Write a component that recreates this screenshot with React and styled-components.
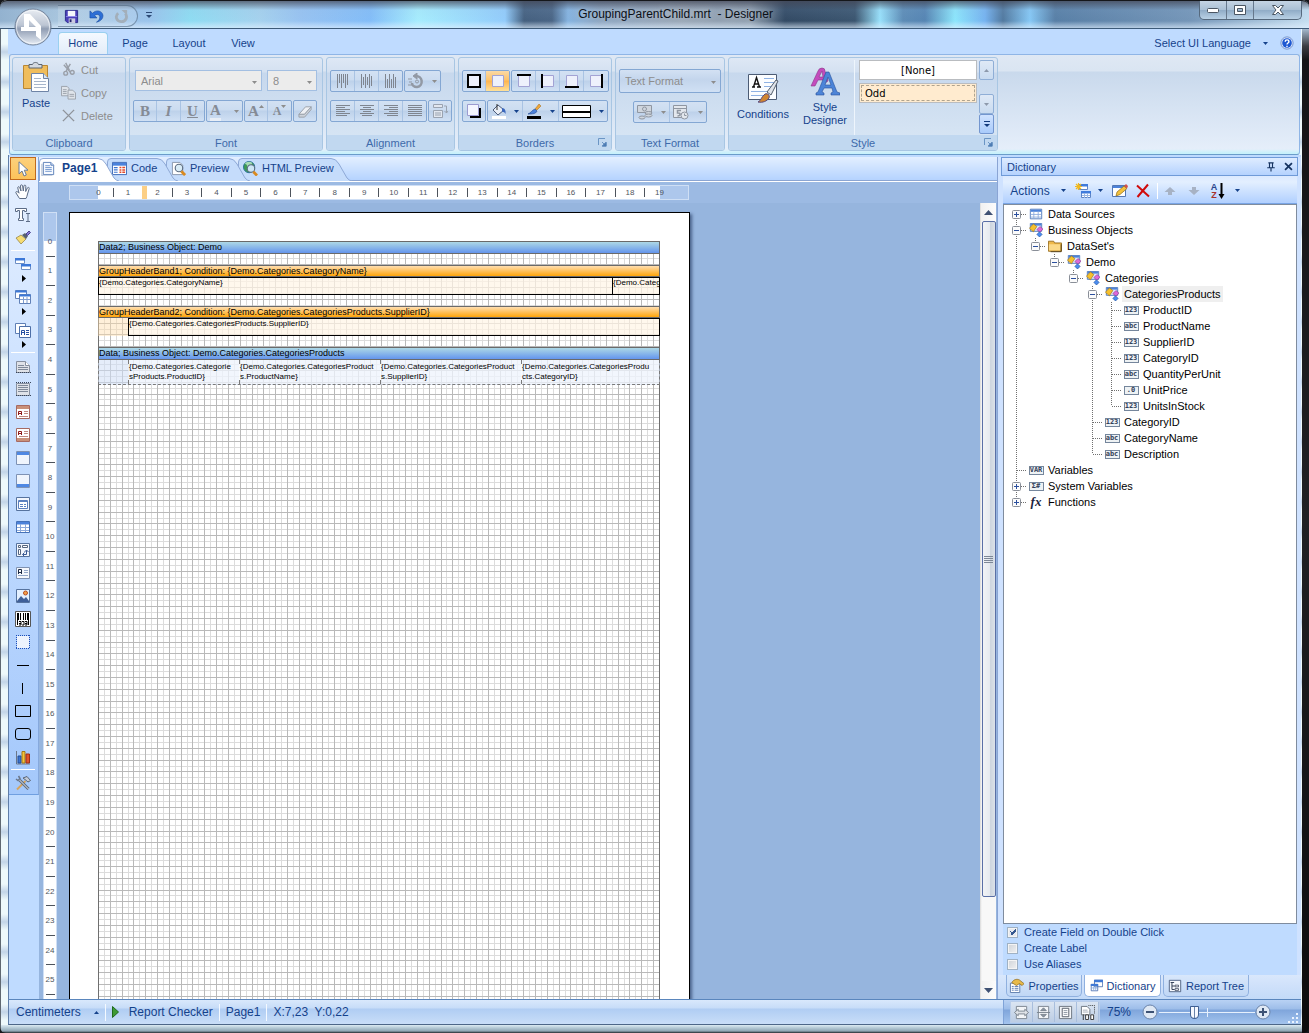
import React, { useState } from 'react';
import styled, { createGlobalStyle, css } from 'styled-components';

const GlobalStyle = createGlobalStyle`
  * { box-sizing: border-box; }
  body {
    margin: 0;
    overflow: hidden;
    background: #16181c;
    font-family: 'Liberation Sans', Arial, sans-serif;
    font-size: 11px;
    color: #15428b;
  }
  button, select, input { font: inherit; color: inherit; }
  button { margin: 0; padding: 0; border: 0; background: none; cursor: default; }
  svg { display: block; flex: none; }
`;

/* ----- Icons ----- */
const SHAPES = {
  save: (
    <>
      <path d="M1.5 1.5h13v13h-11l-2-2z" fill="#4a3fb8" stroke="#2a2a8a" />
      <path d="M4 2h8v6H4z" fill="#f4f6fb" />
      <path d="M5 10h7v5H5z" fill="#c9cbe0" />
      <path d="M6 11h2v3H6z" fill="#23236e" />
      <path d="M2 8h12" stroke="#8f87ea" />
    </>
  ),
  undo: (
    <path d="M1 2v7.500h7.500L6 7c2-2 5-1.500 5.500 1 .5 2.300-1 4.500-3.500 6 4.500-.8 7.300-4 6.800-7.500C14 2 8 .2 3.800 4.500z" fill="#2d6fd6" stroke="#1c4fa3" strokeWidth=".7" />
  ),
  redo: (
    <>
      <path d="M4.500 4.500C.8 7.500 2.500 13 7.500 13.500c5 .3 7.500-5 4.500-8.500" stroke="#a3afba" strokeWidth="3" fill="none" />
      <path d="M8 1h6v6z" fill="#a3afba" />
    </>
  ),
  help: (
    <>
      <circle cx="8" cy="8" r="7" fill="#dfe9fa" stroke="#6c8cc9" />
      <circle cx="8" cy="8" r="5.500" fill="#1e58d2" />
      <path d="M6 6.500c0-2.700 4.200-2.700 4.200 0 0 1.600-2.200 1.500-2.200 3.200M8 11v1.600" stroke="#fff" strokeWidth="1.600" fill="none" />
    </>
  ),
  cut: (
    <g stroke="#9a9fa8" fill="none" strokeWidth="1.500">
      <path d="M5 1l4 8M10 2L5.500 9.500M3 3l7 8" />
      <circle cx="5" cy="12" r="2" />
      <circle cx="12" cy="11" r="2" />
    </g>
  ),
  copy: (
    <g fill="#dfe4ea" stroke="#9ba1aa">
      <path d="M.5 1.500h6l2 2v8h-8z" />
      <path d="M7.500 5.500h5l3 3v6.500h-8z" />
      <path d="M2 5h4M2 7h4M2 9h4M9 10h5M9 12h5" />
    </g>
  ),
  cross: <path d="M2 2l12 12M14 2L2 14" stroke="#8f949b" strokeWidth="1.500" />,
  bucket: (
    <>
      <path d="M2 7l5-5 6 5-6 5z" fill="#e8edf5" stroke="#4b5a78" />
      <path d="M6 1v6" stroke="#333" />
      <path d="M11 5c3 0 4 3 3.500 6-1-2-2.500-2.500-3.500-2z" fill="#3b67bd" />
      <path d="M1 13h14v3H1z" fill="#fff" />
    </>
  ),
  pen: (
    <>
      <path d="M13 1l2 2-4 4-2-1z" fill="#f0a63a" stroke="#9c6a1d" strokeWidth=".5" />
      <path d="M9 6l2 2c-1 3-5 3-9 3 3-1 4-4 7-5z" fill="#4c82da" stroke="#23478f" strokeWidth=".6" />
      <path d="M1 13h14v3H1z" fill="#000" />
    </>
  ),
  shadowBox: (
    <>
      <path d="M4 13h9V5h2v10H4z" fill="#000" />
      <path d="M1.500 1.500h11v11h-11z" fill="#f4f6ff" stroke="#9b9bd0" />
    </>
  ),
  rotate: (
    <g fill="none" stroke="#9299a4">
      <path d="M7 3c8-1 9 10 2 11-3 0-5-2-5-4" strokeWidth="2.500" />
      <path d="M9 0v6L5 3z" fill="#9299a4" />
      <path d="M0 6h4M1 9h3M0 12h4" />
      <circle cx="9" cy="8.500" r="1.500" />
    </g>
  ),
  wrap: (
    <g fill="none" stroke="#9aa3b0">
      <path d="M1.500 1.500h9v3h-9zM1.500 7.500h9v7h-9z" fill="#e2e7ef" />
      <path d="M3 10h6M3 12h6M12 3h2.500v7M12.500 8l2 2 1.500-2" />
    </g>
  ),
  eraser: (
    <>
      <path d="M1 11l7-8h6l-7 8z" fill="#eef0f4" stroke="#9aa0aa" />
      <path d="M1 11v3h6l7-8V3l-7 8z" fill="#cdd3db" stroke="#9aa0aa" />
    </>
  ),
  money: (
    <g fill="#cfd5dd" stroke="#8f96a1">
      <path d="M.5 1.500h14v7H.5z" />
      <circle cx="7.500" cy="5" r="2" />
      <ellipse cx="11.500" cy="9" rx="3.500" ry="1.500" />
      <ellipse cx="11.500" cy="11.500" rx="3.500" ry="1.500" />
      <ellipse cx="5" cy="13.500" rx="3" ry="1.500" />
    </g>
  ),
  date: (
    <g fill="#e3e7ed" stroke="#8f96a1">
      <path d="M.5 1.500h13v12H.5zM.5 4.500h13" />
      <path d="M8 6.500H4.500v2.500c3.500-.5 3.500 3 0 3" fill="none" strokeWidth="1.500" />
      <circle cx="11.500" cy="11.500" r="3.500" />
      <path d="M11.500 9.500v2h2" fill="none" />
    </g>
  ),
  page: (
    <>
      <path d="M2.500 1.500h8l3 3v10h-11z" fill="#f7faff" stroke="#5b7fb8" />
      <path d="M10.500 1.500v3h3" fill="#c9dbf5" stroke="#5b7fb8" />
      <path d="M4.500 5h5M4.500 7h7M4.500 9h7M4.500 11h7" stroke="#6f94cd" />
      <path d="M1 3v13h11" stroke="#9fb0c8" fill="none" />
    </>
  ),
  code: (
    <>
      <path d="M.5 1.500h15v13H.5z" fill="#fff" stroke="#3764b4" />
      <path d="M1 2h14v3H1z" fill="#4a82dd" />
      <path d="M2 7h4M2 9.500h4M2 12h4" stroke="#3c74d0" strokeWidth="1.200" />
      <path d="M8 7h2M11 7h3M8 9.500h2M11 9.500h3M8 12h2M11 12h3" stroke="#e0492c" strokeWidth="1.600" />
    </>
  ),
  preview: (
    <>
      <path d="M1.500 1.500h8l3 3v10h-11z" fill="#fff" stroke="#8795ab" />
      <circle cx="8.500" cy="7.500" r="4" fill="#d9ecf6" stroke="#5b6b80" strokeWidth="1.200" />
      <path d="M11 11l4 4" stroke="#d98a20" strokeWidth="3" />
    </>
  ),
  html: (
    <>
      <circle cx="6.500" cy="6.500" r="6" fill="#3d9a54" stroke="#2b6f9c" />
      <path d="M2 3c3 1 3 3 2 5l4-3 2-3C7 0 3 1 2 3z" fill="#a6dcb4" />
      <circle cx="8.500" cy="8" r="4" fill="#cde6f4" stroke="#5b6b80" strokeWidth="1.200" />
      <path d="M11 11.500l4 4" stroke="#d98a20" strokeWidth="3" />
    </>
  ),
  arrow: <path d="M4 .8v12l3-2.800 2 5 2.300-1-2-4.800H13z" fill="#fff" stroke="#6b7b95" />,
  hand: (
    <path d="M4.500 14.500L1 9c-.8-1.500 1-2 2-.8l1 1L2.800 4c-.3-1.500 1.400-1.800 1.900-.4L6 7 5.500 2c0-1.600 1.900-1.600 2.100 0L8.300 7l.6-5c.3-1.400 2-1.200 1.900.3L10.700 7.500l1.700-3.600c.7-1.200 2.100-.5 1.800.8L12.500 10c-.4 2-.7 3-1.500 4.500z" fill="#fff" stroke="#5c6c86" />
  ),
  textEdit: (
    <>
      <path d="M.5 1.500h11v3H9.500V3.500h-2v8h1v2h-5v-2h1v-8h-2v1h-2z" fill="#fff" stroke="#5c6c86" />
      <path d="M11 6.500h4M11 14.500h4M13 7v8" stroke="#5c6c86" />
    </>
  ),
  brush: (
    <>
      <path d="M1 8l5-3 5 4-5 5z" fill="#f6dc73" stroke="#8d7a3c" strokeWidth=".7" />
      <path d="M7 5l3-2 3 3-2 3z" fill="#57606e" />
      <path d="M11 4l3-3 1.500 1.500-3 3z" fill="#8478d0" stroke="#4b4290" />
    </>
  ),
  bands: (
    <>
      <path d="M.5 2.500h9v5h-9zM6.500 8.500h9v5h-9z" fill="#fff" stroke="#6e8fc4" />
      <path d="M0 2h10v2.500H0zM6 8h10v2.500H6z" fill="#3c78d8" />
    </>
  ),
  crossBands: (
    <>
      <path d="M.5 1.500h11v8H.5z" fill="#fff" stroke="#6181b8" />
      <path d="M.5 1.500h11v2H.5z" fill="#3c78d8" />
      <path d="M4.500 5.500h11v9h-11z" fill="#fff" stroke="#6181b8" />
      <path d="M4.500 5.500h11v2h-11z" fill="#3c78d8" />
      <path d="M5 10.500h10M8.500 8v6M12 8v6" stroke="#7f9dd0" />
    </>
  ),
  components: (
    <>
      <path d="M.5 1.500h10v10H.5z" fill="#fff" stroke="#5f7fb5" />
      <path d="M4.500 4.500h11v11h-11z" fill="#fff" stroke="#4d6fa8" />
      <path d="M6.500 13V8.500h3V13M6.500 10.500h3M11 8.500h3M11 10.500h3M11 12.500h3" stroke="#254fa0" fill="none" />
    </>
  ),
  reportTitle: (
    <>
      <path d="M1.500 3.500h9l4 4v7h-13z" fill="#dfe2e8" stroke="#8790a0" />
      <path d="M10.500 3.500v4h4" fill="#fff" stroke="#8790a0" />
      <path d="M3 7.500h6M3 9.500h10M3 11.500h10" stroke="#7f8999" />
      <path d="M1 14.500h15" stroke="#39455a" strokeDasharray="1 1" />
    </>
  ),
  reportSummary: (
    <>
      <path d="M1.500 2.500h13v12h-13z" fill="#dfe2e8" stroke="#8790a0" />
      <path d="M3 4.500h10M3 6.500h10M3 8.500h10M3 10.500h10" stroke="#7f8999" />
      <path d="M1 1.500h15M1 14.500h15" stroke="#39455a" strokeDasharray="1 1" />
    </>
  ),
  headerBand: (
    <>
      <path d="M1.500 1.500h13v13h-13z" fill="#fff" stroke="#a66a63" />
      <path d="M2 2h12v3H2z" fill="#c99079" />
      <path d="M3.500 11V7.500h3V11M3.500 9.500h3" stroke="#8e1d1d" fill="none" />
      <path d="M9 7.500h4M9 9.500h4M4 12.500h9" stroke="#c08b83" />
    </>
  ),
  footerBand: (
    <>
      <path d="M1.500 1.500h13v13h-13z" fill="#fff" stroke="#a66a63" />
      <path d="M2 11h12v3H2z" fill="#c99079" />
      <path d="M3.500 8V4.500h3V8M3.500 6.500h3" stroke="#8e1d1d" fill="none" />
      <path d="M9 4.500h4M9 6.500h4M4 9.500h9" stroke="#c08b83" />
    </>
  ),
  topBand: (
    <>
      <path d="M1.500 1.500h13v13h-13z" fill="#f0f5fd" stroke="#7e92b5" />
      <path d="M2 2h12v3H2z" fill="#4f88e3" />
    </>
  ),
  bottomBand: (
    <>
      <path d="M1.500 1.500h13v13h-13z" fill="#f0f5fd" stroke="#7e92b5" />
      <path d="M2 11h12v3H2z" fill="#4f88e3" />
    </>
  ),
  panel: (
    <>
      <path d="M1.500 1.500h13v13h-13z" fill="#f2f6fd" stroke="#56739f" />
      <path d="M3.500 4.500h9v8h-9z" fill="#fff" stroke="#5b7fbe" />
      <path d="M4 5.500h8M5 8.500h3M9 8.500h2M5 10.500h3M9 10.500h2" stroke="#5c82c2" />
    </>
  ),
  table: (
    <>
      <path d="M1.500 2.500h13v11h-13z" fill="#fff" stroke="#4672b8" />
      <path d="M2 3h12v2.500H2z" fill="#4c82da" />
      <path d="M2 8.500h12M2 11.500h12M5.500 5v8M10.500 5v8" stroke="#8daadb" />
    </>
  ),
  crosstab: (
    <>
      <path d="M1.500 1.500h13v13h-13z" fill="#f2f6fd" stroke="#56739f" />
      <path d="M3.500 3.500h2v2h-2zM7.500 3.500h5v2h-5zM3.500 7.500h2v5h-2z" fill="#fff" stroke="#55657f" />
      <path d="M8 12.500h3.500v-4M9.500 10.500l-2 2 2 2M9.500 10l2-2 2 2" stroke="#3a5a94" fill="none" />
    </>
  ),
  text: (
    <>
      <path d="M1.500 2.500h13v11h-13z" fill="#f5f8fd" stroke="#7f92b2" />
      <path d="M3.500 9V4.500h3V9M3.500 7.500h3" stroke="#1f2c46" fill="none" />
      <path d="M9 5.500h4M9 7.500h4M3 10.500h10" stroke="#94a8c9" />
    </>
  ),
  image: (
    <>
      <path d="M1.500 1.500h13v13h-13z" fill="#e4f0ff" stroke="#56739f" />
      <circle cx="10.500" cy="5" r="2" fill="#f1a04a" stroke="#b84d1e" />
      <path d="M2 13l4-5 3 3 2-2 3 4v1H2z" fill="#3f5f98" />
    </>
  ),
  barcode: (
    <>
      <path d="M.5.500h15v15H.5z" fill="#fff" stroke="#555" />
      <path d="M3.500 2v7M5.500 2v7M8.500 2v7M10.500 2v7M13.500 2v12M2.500 2v12M12.500 2v7" stroke="#000" />
      <path d="M4 10.500h2v3.500H4M7 10.500h2v3.500H7M10 10.500h2v3.500h-2M4 12.500h2M10 12.500h2" stroke="#000" fill="none" />
    </>
  ),
  dottedBox: (
    <>
      <path d="M2 2h12v12H2z" fill="#edf3fd" />
      <path d="M1 1.500h14M1 14.500h14M1.500 1v14M14.500 1v14" stroke="#1f4fb8" strokeDasharray="1 1" />
    </>
  ),
  hline: <path d="M2 8.500h12" stroke="#000" />,
  vline: <path d="M7.500 3v11" stroke="#000" />,
  rect: <path d="M.5 2.500h15v11H.5z" stroke="#000" fill="none" />,
  roundRect: <rect x=".5" y="2.500" width="15" height="11" rx="2.500" stroke="#000" fill="none" />,
  chart: (
    <>
      <path d="M1.500 2v13H15" stroke="#6c7788" fill="none" />
      <path d="M3 7h3v7H3z" fill="#3c74d0" stroke="#234c94" />
      <path d="M7 2.500h3V14H7z" fill="#f4c33a" stroke="#a27916" />
      <path d="M11 5h3.500v9H11z" fill="#e2532c" stroke="#9c2f14" />
    </>
  ),
  tools: (
    <>
      <path d="M2 14.500L10.500 6" stroke="#d8a45c" strokeWidth="2" />
      <path d="M8 3l4-1.500 3.500 4-2.500 1.500-3-2.500z" fill="#c3cad5" stroke="#5b6677" />
      <path d="M4.500 5l9 9" stroke="#5f6b7d" strokeWidth="3" />
      <path d="M4.500 5l9 9" stroke="#e4e9f0" />
      <path d="M1 4l2 1.500 2-2L3.500 1" stroke="#6c788b" fill="none" strokeWidth="1.500" />
    </>
  ),
  newItem: (
    <>
      <path d="M4.500 1.500h8v5h-8zM6.500 8.500h9v6h-9z" fill="#fff" stroke="#5e85c5" />
      <path d="M4 1h9v2.500H4zM6 8h10v2.500H6z" fill="#3f7bdb" />
      <path d="M7 12.500h8M9.500 10v5M12.500 10v5" stroke="#9ab6e2" />
      <path d="M3.500 0v7M0 3.500h7M1 1l5 5M6 1L1 6" stroke="#f2b91d" strokeWidth="1.200" />
    </>
  ),
  edit: (
    <>
      <path d="M.5 2.500h13v11H.5z" fill="#fff" stroke="#5478b4" />
      <path d="M1 3h12v2H1z" fill="#4c82da" />
      <path d="M4 13l1-4 7-6 3 2.500-7 6z" fill="#f4c23c" stroke="#8d6a1b" strokeWidth=".7" />
      <path d="M12 3l2-2 2 2-1 2.500z" fill="#d2524b" />
    </>
  ),
  remove: <path d="M2 2.500l12 11M13 1.500L2.500 14" stroke="#d00b0b" strokeWidth="2" />,
  up: <path d="M8 4l5.500 5H10v3H6V9H2.500z" fill="#a7b2c4" />,
  down: <path d="M8 12L2.500 7H6V4h4v3h3.500z" fill="#a7b2c4" />,
  folder: (
    <>
      <path d="M.5 2.500h6l1 2h8v9.500H.5z" fill="#efb94a" stroke="#94691c" />
      <path d="M1 6h13v7H1z" fill="#fbd988" />
      <path d="M15 6v8.500H3" stroke="#4d3a14" fill="none" />
    </>
  ),
  business: (
    <>
      <path d="M1.500.5h13v9h-13z" fill="#dfe9fb" stroke="#4672b8" />
      <path d="M2 1h12v2H2z" fill="#4c82da" />
      <path d="M.5 6l4.500-5 4 3-4 6z" fill="#f6c02c" stroke="#9a7012" strokeWidth=".7" />
      <path d="M9 7.500l3.500-3.500 3.500 3-3.500 3.500z" fill="#dd6ad8" stroke="#8e348b" strokeWidth=".7" />
      <path d="M9 13l3-3 3 3-3 3z" fill="#4a8df0" stroke="#1c4f9d" strokeWidth=".7" />
    </>
  ),
  properties: (
    <>
      <path d="M1.500 5.500h10v10h-10z" fill="#fff" stroke="#5d7cac" />
      <path d="M3 9h2M6 9h4M3 11h2M6 11h4M3 13h2M6 13h4" stroke="#5677b0" />
      <path d="M3 5c2-4 6-4 8-3l5 4-2 2-3-2-3 2z" fill="#e8ba4a" stroke="#8f6a1c" strokeWidth=".8" />
    </>
  ),
  dictionary: (
    <>
      <path d="M5.500 1.500h10v8h-10zM1.500 6.500h8v8h-8z" fill="#fff" stroke="#4169ae" />
      <path d="M5 1h11v3H5zM1 6h9v2.500H1z" fill="#3f78d4" />
      <path d="M2 11h7M4.500 9v5M7 9v5" stroke="#8babdd" />
    </>
  ),
  reportTree: (
    <>
      <path d="M1.500 1.500h13v13h-13z" fill="#f6f9fe" stroke="#46597a" />
      <path d="M3 4h4M4.500 4v8h3M4.500 8h3" stroke="#222f48" fill="none" />
      <path d="M8 7h4v2H8zM8 11h4v2H8z" fill="#fff" stroke="#222f48" strokeWidth=".8" />
    </>
  ),
  fitWidth: (
    <g stroke="#7b848f">
      <path d="M2.500 1.500h11v13h-11z" fill="#f3f5f8" />
      <path d="M.5 8l4-3.500v2h7v-2l4 3.500-4 3.500v-2h-7v2z" fill="#dfe3e8" />
    </g>
  ),
  fitHeight: (
    <g stroke="#7b848f">
      <path d="M2.500 1.500h11v13h-11z" fill="#f3f5f8" />
      <path d="M8 3l3 3H5zM8 13l3-3H5z" fill="#8b94a0" />
      <path d="M1 8h14" />
    </g>
  ),
  fitPage: (
    <>
      <path d="M1.500 1.500h13v13h-13z" fill="#f3f5f8" stroke="#6b747f" />
      <path d="M4.500 3.500h7v9h-7z" fill="#fff" stroke="#555d68" />
      <path d="M6 6h4M6 8h4M6 10h4" stroke="#8d96a2" />
    </>
  ),
  zoom100: (
    <>
      <path d="M1.500 1.500h6l3 3v6h-9z" fill="#fff" stroke="#6b747f" />
      <path d="M3 5.500h5M3 7.500h6" stroke="#a4abb5" />
      <path d="M9 .5h6.500V10" fill="none" stroke="#333" strokeDasharray="1 1" />
      <path d="M3.500 10v6M6 10.500h3v5H6zM11.500 10.500h3v5h-3z" fill="#fff" stroke="#333" />
    </>
  ),
  pin: <path d="M4.500 2.500h7M6 2v7M10 2v7M3 9h10M8 9v5" stroke="#15325f" strokeWidth="1.500" fill="none" />,
  close: <path d="M3 3l10 10M13 3L3 13" stroke="#15325f" strokeWidth="2.500" />,
};

const Icon = ({ name, size = 16 }) => (
  <svg width={size} height={size} viewBox="0 0 16 16" fill="none" aria-hidden="true">
    {SHAPES[name]}
  </svg>
);

const Caret = ({ color = '#15428b', up }) => (
  <svg width="5" height="3" viewBox="0 0 5 3" aria-hidden="true">
    <path d={up ? 'M0 3h5L2.500 0z' : 'M0 0h5L2.500 3z'} fill={color} />
  </svg>
);

/* four strokes around a box, heavy ones are the active borders */
const BorderIcon = ({ sides }) => (
  <svg width="16" height="16" viewBox="0 0 16 16" aria-hidden="true">
    <path d="M2.500 2.500h11v11h-11z" fill="#eef1fc" stroke="#a3a3d4" />
    {sides.includes('t') && <path d="M1 2h14" stroke="#000" strokeWidth="2" />}
    {sides.includes('b') && <path d="M1 14h14" stroke="#000" strokeWidth="2" />}
    {sides.includes('l') && <path d="M2 1v14" stroke="#000" strokeWidth="2" />}
    {sides.includes('r') && <path d="M14 1v14" stroke="#000" strokeWidth="2" />}
  </svg>
);

const ALIGN_LINES = {
  left: [[0, 14], [0, 9], [0, 14], [0, 9], [0, 14], [0, 11]],
  center: [[0, 14], [3, 11], [0, 14], [3, 11], [0, 14], [2, 12]],
  right: [[0, 14], [5, 14], [0, 14], [5, 14], [0, 14], [3, 14]],
  justify: [[0, 14], [0, 14], [0, 14], [0, 14], [0, 14], [0, 14]],
};
const AlignIcon = ({ kind, vertical }) => (
  <svg width="14" height="14" viewBox="0 0 14 14" aria-hidden="true">
    {ALIGN_LINES[kind].map(([a, b], i) => (
      <path
        key={i}
        d={vertical ? `M${i * 2 + 1.5} ${a}V${b}` : `M${a} ${i * 2 + 1.5}H${b}`}
        stroke="#7f858f"
      />
    ))}
  </svg>
);

const Launcher = () => (
  <svg width="9" height="9" viewBox="0 0 9 9" aria-hidden="true">
    <path d="M.5 7V.5H7M4 4l3 3M8 4v4H4z" stroke="#6b95c4" fill="none" />
    <path d="M8.500 4v4.500H4z" fill="#4d7cb3" />
  </svg>
);

/* ----- Window frame ----- */
const Frame = styled.div`
  position: relative;
  height: 100vh;
  display: flex;
  flex-direction: column;
  padding: 0 8px 8px;
  border-radius: 7px 7px 6px 6px;
  background:
    linear-gradient(180deg, #d7e8f8 0, #b7cfe6 26px, #3b3d42 46px, #141416 60px, #202124 520px, #0c0c0d 100%) right top / 7px 100% no-repeat,
    linear-gradient(90deg, #5f6871 0, #5f6871 1px, transparent 1px) left top / 8px 100% no-repeat,
    linear-gradient(0deg, #20262c 0, #8fa6b4 2px, #b3c8d4 5px, #dcebf2 8px) left bottom / 100% 8px no-repeat,
    repeating-linear-gradient(180deg, #eef9fb 0, #eef9fb 14px, #c3d5e8 22px, #eef9fb 30px);
`;

const TitleBar = styled.header`
  height: 29px;
  margin: 0 -8px;
  padding-left: 58px;
  display: flex;
  align-items: flex-start;
  border-radius: 7px 7px 0 0;
  border-top: 1px solid #15171b;
  border-bottom: 1px solid #3c5a78;
  background:
    linear-gradient(180deg, rgba(70, 74, 90, 0.75) 0, rgba(150, 180, 215, 0.1) 9px, rgba(255, 255, 255, 0) 20px, rgba(225, 240, 255, 0.75) 28px),
    linear-gradient(90deg, #93b2cf 0, #a9c6de 60px, #9bc4ec 150px, #8fdcf2 190px, #a6d2ee 260px, #98c3f1 300px, #83bdf8 370px, #a7edfd 418px, #93ccfb 505px, #45607f 524px, #4a6585 552px, #86b4e0 568px, #8aa3bf 600px, #98a6b6 680px, #8d9dae 750px, #334a64 785px, #3b556f 855px, #99e1fb 880px, #5d8cb6 903px, #5685b3 925px, #8de6fc 955px, #76b3f0 985px, #52799f 1003px, #86c8f5 1030px, #587fa6 1055px, #7596b8 1190px, #c5def0 100%);
`;

const QuickAccess = styled.div`
  height: 22px;
  margin-top: 4px;
  width: 80px;
  padding: 0 8px 0 6px;
  display: flex;
  align-items: center;
  justify-content: space-between;
  border: 1px solid rgba(70, 95, 120, 0.55);
  border-left: 0;
  border-radius: 0 12px 12px 0;
  background: rgba(255, 255, 255, 0.14);
`;

const IconButton = styled.button`
  display: flex;
  align-items: center;
  justify-content: center;
`;

const QuickMore = styled(IconButton)`
  width: 22px;
  height: 28px;
`;

const Title = styled.h1`
  flex: 1;
  margin: 0;
  padding-right: 8px;
  text-align: center;
  white-space: pre;
  font-size: 12px;
  font-weight: 400;
  line-height: 27px;
  color: #0b0f16;
  text-shadow: 0 0 8px rgba(255, 255, 255, 0.5);
`;

const WindowButtons = styled.div`
  display: flex;
  width: 103px;
  height: 19px;
  margin-right: 7px;
  border: 1px solid #56697d;
  border-top: 0;
  border-radius: 0 0 5px 5px;
  background: linear-gradient(#c5d4e3 0, #a9bfd4 9px, #8fabc6 9px, #b9d1e5 100%);

  button { width: 27px; border-right: 1px solid #66788c; }
  button:last-child { width: auto; flex: 1; border-right: 0; }
`;

const Orb = styled.button`
  position: absolute;
  left: 14px;
  top: 8px;
  z-index: 2;
  width: 38px;
  height: 38px;
`;

/* ----- Menu ----- */
const MenuRow = styled.nav`
  height: 25px;
  padding: 3px 7px 0 50px;
  display: flex;
  background: #bfdbff;
`;

const MenuTab = styled.button`
  height: 23px;
  min-width: ${(p) => (p.$active ? 50 : 54)}px;
  padding-bottom: 2px;
  border: 1px solid transparent;
  border-bottom: 0;
  border-radius: 4px 4px 0 0;
  ${(p) => p.$active && css`
    border-color: #9ad0f0;
    background: linear-gradient(#f4f9ff, #e2ecf8);
  `}
`;

const MenuRight = styled.div`
  margin-left: auto;
  height: 22px;
  display: flex;
  align-items: center;
  gap: 12px;
`;

/* ----- Ribbon ----- */
const Ribbon = styled.section`
  height: 101px;
  margin: 0 1px;
  padding: 2px 2px 0;
  display: flex;
  gap: 3px;
  border: 1px solid #8fb5e6;
  border-bottom: 1px solid #6b9cc9;
  border-radius: 3px;
  background: linear-gradient(#dfe8f4 0, #dae5f2 16px, #c9d9ec 17px, #e5eefa 94px, #c8f1fb 98px);
`;

const Group = styled.div`
  width: ${(p) => p.$w}px;
  height: 94px;
  display: flex;
  flex-direction: column;
  border: 1px solid #a8c6e3;
  border-radius: 3px;
  background: linear-gradient(#dee8f5 0, #d4e1f1 14px, #c7d8ed 15px, #d9e7f5 100%);
  overflow: hidden;
`;

const GroupBody = styled.div`
  flex: 1;
  padding: ${(p) => p.$pad || '12px 3px 0'};
  display: flex;
  flex-direction: ${(p) => (p.$row ? 'row' : 'column')};
  gap: ${(p) => p.$gap || 0}px;
`;

const GroupFooter = styled.div`
  height: 15px;
  padding: 0 3px;
  display: grid;
  grid-template-columns: 10px 1fr 10px;
  align-items: center;
  text-align: center;
  color: #3e6aaa;
  background: #c1d8f0;
`;

const ToolLine = styled.div`
  display: flex;
  gap: 1px;
  justify-content: ${(p) => (p.$center ? 'center' : 'flex-start')};
`;

const ButtonSet = styled.div`
  height: 22px;
  display: flex;
  border: 1px solid #84a7d3;
  border-radius: 2px;
  background: linear-gradient(#d3e1f3 0, #cbdcf0 9px, #bdd1ea 10px, #d0e0f4 100%);
`;

const ToolButton = styled.button`
  width: ${(p) => p.$w || 24}px;
  padding: 0 3px;
  display: flex;
  align-items: center;
  justify-content: ${(p) => (p.$split ? 'space-between' : 'center')};
  border-right: 1px solid #a9c3e3;
  &:last-child { border-right: 0; }
  &:disabled { color: #858b95; }
  ${(p) => p.$raised && css`
    svg { align-self: flex-start; margin-top: 4px; }
  `}
  ${(p) => p.$checked && css`
    background: linear-gradient(#fbd9a5 0, #fcc36b 9px, #fdb44f 10px, #fee19a 100%);
  `}
`;

const Letter = styled.span`
  font-family: 'Liberation Serif', serif;
  font-size: ${(p) => p.$size || 15}px;
  font-weight: 700;
  line-height: 16px;
  font-style: ${(p) => (p.$italic ? 'italic' : 'normal')};
  text-decoration: ${(p) => (p.$underline ? 'underline' : 'none')};
  border-bottom: ${(p) => (p.$bar ? '3px solid #e8eef6' : '0')};
`;

const SelectWrap = styled.span`
  position: relative;
  width: ${(p) => p.$w}px;
  height: ${(p) => p.$h || 21}px;
  margin-left: ${(p) => p.$ml || 0}px;

  select {
    appearance: none;
    width: 100%;
    height: 100%;
    padding: 0 5px;
    border: 1px solid ${(p) => (p.$flat ? '#84a7d3' : '#a3bfe2')};
    border-radius: ${(p) => (p.$flat ? 2 : 0)}px;
    background: ${(p) => (p.$flat ? 'linear-gradient(#d3e1f3 0, #c3d5ec 10px, #d0e0f4 100%)' : '#ececec')};
    color: #8d8d8d;
    opacity: 1;
  }
  svg {
    position: absolute;
    right: 5px;
    top: 50%;
  }
`;

const BigButton = styled.button`
  width: ${(p) => p.$w}px;
  padding-top: ${(p) => p.$top}px;
  display: flex;
  flex-direction: column;
  align-items: center;
  gap: ${(p) => p.$gap || 4}px;
  line-height: 13px;
`;

const SmallButtons = styled.div`
  display: flex;
  flex-direction: column;
`;

const SmallButton = styled.button`
  height: 23px;
  display: flex;
  align-items: center;
  gap: 5px;
  color: #8d8d8d;
`;

const Gallery = styled.div`
  flex: 1;
  margin-left: -2px;
  padding: 0 2px 0 4px;
  display: flex;
  flex-direction: column;
  gap: 3px;
  border-left: 1px solid #eef5fc;
`;

const GalleryItem = styled.button`
  height: 20px;
  padding: 0 5px;
  border: 1px solid #b9bcc0;
  background: ${(p) => (p.$selected ? '#ffebcf' : '#fff')};
  outline: ${(p) => (p.$selected ? '1px dashed #b0a48f' : '0')};
  outline-offset: -3px;
  text-align: ${(p) => (p.$selected ? 'left' : 'center')};
  font-family: 'DejaVu Sans', sans-serif;
  font-size: 10px;
  color: #000;
`;

const GalleryScroll = styled.div`
  width: 15px;
  height: 74px;
  display: flex;
  flex-direction: column;
`;

const ScrollStep = styled.button`
  height: 20px;
  display: flex;
  flex-direction: column;
  gap: 1px;
  align-items: center;
  justify-content: center;
  border: 1px solid ${(p) => (p.$strong ? '#7396cf' : '#8faed6')};
  border-radius: 2px;
  margin-top: ${(p) => (p.$push ? 'auto' : '0')};
  background: ${(p) => (p.$strong ? 'linear-gradient(#cfe2ff, #a9cbfb)' : 'linear-gradient(#dfe9f6, #c9dbf0)')};
`;

/* ----- Body ----- */
const Body = styled.main`
  flex: 1;
  min-height: 0;
  padding-top: 2px;
  display: grid;
  grid-template-columns: 30px minmax(0, 1fr) 303px;
  background: #bfdbff;
  border-left: 1px solid #5f7ea8;
`;

const Toolbox = styled.aside`
  align-self: start;
  padding-left: 1px;
  display: flex;
  flex-direction: column;
  align-items: flex-start;
  background: linear-gradient(#e6f0ff 0, #c3dcff 50%, #a4c8fb 100%);
  border-right: 1px solid #86a9dd;
  border-bottom: 1px solid #6f9fe0;
`;

const ToolboxButton = styled.button`
  width: 26px;
  height: 23px;
  display: flex;
  align-items: center;
  justify-content: center;
  ${(p) => p.$active && css`
    border: 1px solid #c06a1c;
    background: linear-gradient(#fcd07c, #fdc35a);
  `}
`;

const ToolboxArrow = styled.button`
  width: 26px;
  height: 10px;
  padding-left: 2px;
  display: flex;
  justify-content: center;
  align-items: flex-start;
`;

const ToolboxRule = styled.hr`
  width: 24px;
  height: 1px;
  margin: 1px;
  border: 0;
  background: #fff;
`;

const Workspace = styled.section`
  min-width: 0;
  min-height: 0;
  display: flex;
  flex-direction: column;
  border-right: 1px solid #8aa4d4;
`;

const DocTabs = styled.div`
  height: 24px;
  padding-top: 1px;
  display: flex;
  background: linear-gradient(#e3efff 0, #b5d3ff 100%);
  border-bottom: 1px solid #8ba5d2;
`;

const DocTab = styled.button`
  position: relative;
  z-index: ${(p) => p.$z};
  height: 23px;
  width: ${(p) => p.$w}px;
  margin-right: -12px;
  padding: 0 0 3px ${(p) => (p.$active ? 2 : 5)}px;
  display: flex;
  align-items: center;
  gap: ${(p) => (p.$active ? 6 : 4)}px;
  font-size: ${(p) => (p.$active ? 12 : 11)}px;
  font-weight: ${(p) => (p.$active ? 700 : 400)};

  > svg:first-child {
    position: absolute;
    left: 0;
    top: 0;
    z-index: -1;
  }
`;

const Canvas = styled.div`
  flex: 1;
  min-height: 0;
  padding: 1px 1px 0 4px;
  display: grid;
  grid-template-columns: 26px minmax(0, 1fr) 16px;
  grid-template-rows: 20px minmax(0, 1fr);
  border-top: 1px solid #fff;
  background: #96b5de;
`;

const TopRulerBar = styled.div`
  grid-column: 1 / 4;
  margin: -1px -1px 0 -4px;
  padding: 3px 0 0 30px;
  background: #9cbae3;
`;

const HRuler = styled.div`
  position: relative;
  width: 620px;
  height: 15px;
  padding-left: 21px;
  overflow: hidden;
  display: flex;
  border: 1px solid #cfdff5;
  background: linear-gradient(90deg, #adc7ec 28px, #fff 28px, #fff 590px, #adc7ec 590px);
`;

const VRuler = styled.div`
  width: 14px;
  margin-top: 9px;
  padding-top: 21px;
  overflow: hidden;
  border: 1px solid #cfdff5;
  border-bottom: 0;
  background: linear-gradient(180deg, #adc7ec 28px, #fff 28px);
`;

const RulerScale = styled.div`
  flex: none;
  display: flex;
  flex-direction: ${(p) => (p.$vertical ? 'column' : 'row')};
  width: ${(p) => (p.$vertical ? '100%' : '576px')};
  height: ${(p) => (p.$vertical ? '768px' : '100%')};
`;

const RulerCell = styled.span`
  flex: 1 1 0;
  min-width: 0;
  min-height: 0;
  display: flex;
  align-items: center;
  justify-content: center;
  font-size: 8px;
  line-height: 9px;
  color: #4f5560;

  i {
    width: ${(p) => (p.$vertical ? '9px' : '1px')};
    height: ${(p) => (p.$vertical ? '1px' : '9px')};
    background: #4d535c;
  }
`;

const CursorMark = styled.span`
  position: absolute;
  left: 72px;
  top: 0;
  width: 5px;
  height: 13px;
  background: #fccf86;
`;

const PageArea = styled.div`
  min-height: 0;
  padding-top: 9px;
  overflow: hidden;
`;

const Sheet = styled.article`
  width: 621px;
  height: 1100px;
  padding: 28px;
  border: 1px solid #000;
  background: #fff;
  box-shadow: 2px 2px 3px rgba(20, 40, 80, 0.6);
`;

const Printable = styled.div`
  position: relative;
  height: 100%;
  width: 562px;
  color: #000;
  border: solid #6f6f6f;
  border-width: 0 1px;
`;

const GridLayer = styled.svg`
  position: absolute;
  left: 0;
  top: 0;
  width: 100%;
  height: 100%;
`;

const Band = styled.section`
  position: relative;
  margin: 0 -1px 11px;
`;

const BandHeader = styled.h2`
  margin: 0;
  height: ${(p) => (p.$tone === 'orange' ? 12 : 13)}px;
  border: 1px solid #6a6a6a;
  background: ${(p) => (p.$tone === 'orange'
    ? 'linear-gradient(#ffdeb0, #ffa50a)'
    : 'linear-gradient(#add8e6, #6495ed)')};
  font-size: 9px;
  font-weight: 400;
  line-height: 10px;
  white-space: nowrap;
`;

const BandBody = styled.div`
  display: flex;
  height: ${(p) => p.$h}px;
  background: ${(p) => (p.$tone === 'orange' ? 'rgba(255, 222, 173, 0.45)' : 'rgba(208, 222, 246, 0.55)')};
  ${(p) => p.$tone === 'blue' && css`
    border: 1px dashed #7a7a7a;
    border-width: 0 1px 1px;
  `}
`;

const Indent = styled.div`
  width: ${(p) => p.$w || 30}px;
`;

const Field = styled.div`
  flex: ${(p) => (p.$w ? 'none' : '1')};
  width: ${(p) => (p.$w ? `${p.$w}px` : 'auto')};
  min-width: 0;
  padding: ${(p) => (p.$boxed ? 0 : 2)}px 0 0 ${(p) => (p.$boxed ? 0 : 1)}px;
  overflow: hidden;
  font-size: 8px;
  line-height: 10px;
  white-space: pre;
  background: rgba(255, 255, 255, 0.5);
  ${(p) => p.$boxed && css`
    border: 1px solid #000;
    & + & { margin-left: -1px; }
  `}
  ${(p) => !p.$boxed && css`
    /* only the corners of the cell are marked */
    background:
      linear-gradient(#7a7a7a, #7a7a7a) left top / 1px 4px no-repeat,
      linear-gradient(#7a7a7a, #7a7a7a) left bottom / 1px 4px no-repeat,
      rgba(255, 255, 255, 0.5);
  `}
`;

const ScrollBar = styled.div`
  display: flex;
  flex-direction: column;
  align-items: center;
  border-left: 1px solid #e1e1e1;
  background: linear-gradient(90deg, #f1f1f1, #fcfcfc);

  button { height: 18px; width: 100%; display: flex; align-items: center; justify-content: center; }
`;

const ScrollTrack = styled.div`
  flex: 1;
  width: 14px;
  background: #f8f8f8;
`;

const ScrollThumb = styled.div`
  height: 89%;
  border: 1px solid #5a6fa6;
  border-radius: 2px;
  display: flex;
  flex-direction: column;
  gap: 1px;
  align-items: center;
  justify-content: center;
  background: linear-gradient(90deg, #f1f3f6 0, #e5e9ef 60%, #cdd5df 62%, #dbe1e9 100%);

  i { width: 9px; height: 1px; background: #7d8796; }
`;

/* ----- Dictionary ----- */
const Side = styled.aside`
  min-height: 0;
  padding: 0 3px;
  display: flex;
  flex-direction: column;
  background: #cfe2ff;
`;

const PanelHead = styled.div`
  height: 19px;
  padding: 0 3px 0 5px;
  display: flex;
  align-items: center;
  gap: 6px;
  border: 1px solid #6f9ad8;
  background: linear-gradient(#dfecff, #b4d2fe);

  h2 { flex: 1; margin: 0; font-size: 11px; font-weight: 400; }
`;

const PanelBox = styled.div`
  flex: 1;
  min-height: 0;
  margin: 0 1px 0 2px;
  display: flex;
  flex-direction: column;
`;

const PanelTools = styled.div`
  height: 28px;
  padding: 2px 6px 0;
  display: flex;
  align-items: center;
  background: linear-gradient(#dbe9ff 0, #e3efff 6px, #b1d0ff 100%);
  border-bottom: 1px solid #79a5e6;

  hr { width: 1px; height: 16px; margin: 0; border: 0; background: #fff; }
`;

const ToolSlot = styled.button`
  width: ${(p) => p.$w}px;
  display: flex;
  align-items: center;
  justify-content: center;
  font-size: 12px;
`;

const SortLetters = styled.span`
  display: flex;
  flex-direction: column;
  font-size: 9px;
  font-weight: 700;
  line-height: 8px;
  color: #28468c;

  b { color: #a8322c; }
`;

const TreeBox = styled.div`
  flex: 1;
  min-height: 0;
  padding: 1px 0 0 3px;
  border: 1px solid #7f8c9e;
  background: #fff;
  color: #000;
  overflow: hidden;
`;

const TreeRow = styled.div`
  height: 16px;
  display: flex;
  align-items: center;
  white-space: nowrap;

  > span:last-child {
    padding: 0 2px;
    line-height: 16px;
    background: ${(p) => (p.$selected ? '#efefef' : 'transparent')};
  }
`;

const TreeIcon = styled.span`
  width: 20px;
  display: flex;
  justify-content: center;
`;

const TypeTag = styled.span`
  width: 15px;
  height: 9px;
  border: 1px solid #75869c;
  background: #eef2f4;
  font-family: 'DejaVu Sans Mono', monospace;
  font-size: 7px;
  font-weight: 700;
  line-height: 7px;
  text-align: center;
  color: #33415a;
`;

const FunctionMark = styled.i`
  font-family: 'Liberation Serif', serif;
  font-size: 13px;
  font-weight: 700;
  line-height: 14px;
  color: #1c2440;
`;

const Options = styled.div`
  padding: 0 4px 3px;
  background: #bfdbff;

  label { height: 16px; display: flex; align-items: center; gap: 6px; }
  input {
    appearance: none;
    width: 11px;
    height: 11px;
    margin: 0;
    border: 1px solid #9fb1c4;
    box-shadow: inset 0 0 0 1px #f4f4f4;
    background: linear-gradient(135deg, #cfd3d8, #f0f1f3);
  }
  input:checked {
    background:
      linear-gradient(45deg, transparent 45%, #36588f 45%, #36588f 60%, transparent 60%) 2px 3px / 3px 4px no-repeat,
      linear-gradient(-45deg, transparent 40%, #36588f 40%, #36588f 62%, transparent 62%) 3px 1px / 6px 6px no-repeat,
      #e6e9ee;
  }
`;

const PanelTabs = styled.div`
  height: 24px;
  margin: 0 -3px;
  padding: 0 8px;
  display: flex;
  gap: 2px;
  background: linear-gradient(#d9e7fc, #c3daf8);
`;

const PanelTab = styled.button`
  height: 22px;
  width: ${(p) => p.$w}px;
  display: flex;
  align-items: center;
  justify-content: center;
  gap: 4px;
  border: 1px solid #8fb0df;
  border-top: 0;
  border-radius: 0 0 5px 5px;
  background: ${(p) => (p.$active ? '#fff' : 'linear-gradient(#d8e7fb, #c0d7f5)')};
`;

/* ----- Status bar ----- */
const StatusBar = styled.footer`
  height: 26px;
  padding-left: 1px;
  display: flex;
  align-items: center;
  border-top: 1px solid #5a86bd;
  border-bottom: 1px solid #4d6788;
  border-left: 1px solid #5f7ea8;
  background: linear-gradient(#d9e8fc 0, #c7dcf8 8px, #b0cdf3 9px, #c9def8 100%);
  font-size: 12px;
`;

const StatusItem = styled.div`
  height: 17px;
  padding: 0 6px;
  display: flex;
  align-items: center;
  gap: ${(p) => p.$gap || 0}px;
  border-right: ${(p) => (p.$last ? 0 : 1)}px solid #f4f9ff;
  white-space: pre;
`;

const StatusRight = styled.div`
  width: 298px;
  height: 24px;
  margin-left: auto;
  padding: 0 2px 0 6px;
  display: flex;
  align-items: center;
  border-left: 1px solid #7fa3d8;
  background: linear-gradient(#b9d2f4 0, #9dbde9 9px, #7fa5db 10px, #a3c4ee 100%);
`;

const ViewModes = styled.div`
  display: flex;
  height: 22px;
  margin-right: 7px;
  border: 1px solid #b9cdea;

  button { width: 22px; display: flex; align-items: center; justify-content: center; background: linear-gradient(#dbe5f2, #bccde4); border-right: 1px solid #a8bedd; }
`;

const ZoomTrack = styled.div`
  flex: none;
  width: 96px;
  height: 20px;
  display: flex;
  align-items: center;

  input { appearance: none; width: 100%; height: 16px; margin: 0; background: linear-gradient(#e6f0fd, #e6f0fd) 0 8px / 100% 1px no-repeat, linear-gradient(#e6f0fd, #e6f0fd) 48px 4px / 1px 9px no-repeat; }
  input::-webkit-slider-thumb {
    appearance: none;
    width: 9px;
    height: 13px;
    border: 1px solid #3f5f92;
    border-radius: 1px 1px 5px 5px;
    background: linear-gradient(90deg, #f6f9ff 3px, #6a83ab 3px, #6a83ab 4px, #f6f9ff 4px);
  }
`;

const SizeGrip = styled.svg`
  margin-left: auto;
  align-self: flex-end;
`;

const RULER_X = Array.from({ length: 39 }, (_, i) => i);
const RULER_Y = Array.from({ length: 52 }, (_, i) => i);
const CM = 561 / 19;

const Ruler = ({ cells, vertical }) => (
  <RulerScale $vertical={vertical}>
    {cells.map((i) => (
      <RulerCell key={i} $vertical={vertical}>{i % 2 ? <i /> : i / 2}</RulerCell>
    ))}
  </RulerScale>
);

// grid step is 0.2 cm, every second line is darker
const gridLines = (count) =>
  Array.from({ length: count }, (_, i) => ({ at: Math.round((i + 1) * CM * 0.2) - 0.5, dark: i % 2 === 1 }));

const PageGrid = () => {
  const xs = gridLines(94);
  const ys = gridLines(180);
  const path = (dark) =>
    xs.filter((l) => l.dark === dark).map((l) => `M${l.at} 0V1100`).join('') +
    ys.filter((l) => l.dark === dark).map((l) => `M0 ${l.at}H562`).join('');
  return (
    <GridLayer aria-hidden="true">
      <path d={path(false)} stroke="#dcdcdc" />
      <path d={path(true)} stroke="#b9b9b9" />
    </GridLayer>
  );
};

const PRODUCT_FIELDS = [
  ['ProductID', '123'], ['ProductName', 'abc'], ['SupplierID', '123'], ['CategoryID', '123'],
  ['QuantityPerUnit', 'abc'], ['UnitPrice', '.0'], ['UnitsInStock', '123'],
].map(([label, tag]) => ({ label, tag }));

const TREE = [
  { label: 'Data Sources', icon: 'table', closed: true },
  {
    label: 'Business Objects',
    icon: 'business',
    children: [{
      label: "DataSet's",
      icon: 'folder',
      children: [{
        label: 'Demo',
        icon: 'business',
        children: [{
          label: 'Categories',
          icon: 'business',
          children: [
            { label: 'CategoriesProducts', icon: 'business', selected: true, children: PRODUCT_FIELDS },
            { label: 'CategoryID', tag: '123' },
            { label: 'CategoryName', tag: 'abc' },
            { label: 'Description', tag: 'abc' },
          ],
        }],
      }],
    }],
  },
  { label: 'Variables', tag: 'VAR' },
  { label: 'System Variables', tag: 'Σ#', closed: true },
  { label: 'Functions', fx: true, closed: true },
];

const Guide = ({ line, node, first, last, box }) => (
  <svg width="19" height="16" viewBox="0 0 19 16" aria-hidden="true">
    <g stroke="#707070" strokeDasharray="1 1">
      {line && <path d="M9.500 0V16" />}
      {node && !first && <path d="M9.500 0V8" />}
      {node && !last && <path d="M9.500 8V16" />}
      {node && <path d="M10 8.500H19" />}
    </g>
    {box && (
      <>
        <rect x="5.500" y="4.500" width="8" height="8" rx="1" fill="#fbfbfb" stroke="#8a8f98" />
        <path d={box === 'plus' ? 'M7 8.500h5M9.500 6v5' : 'M7 8.500h5'} stroke="#2b4f9e" />
      </>
    )}
  </svg>
);

const TreeNodes = ({ nodes, trail = [] }) =>
  nodes.map((n, i) => {
    const last = i === nodes.length - 1;
    const box = n.closed ? 'plus' : n.children ? 'minus' : null;
    return (
      <React.Fragment key={n.label}>
        <TreeRow $selected={n.selected}>
          {trail.map((line, k) => <Guide key={k} line={line} />)}
          <Guide node first={!trail.length && i === 0} last={last} box={box} />
          <TreeIcon>
            {n.tag && <TypeTag>{n.tag}</TypeTag>}
            {n.icon && <Icon name={n.icon} size={14} />}
            {n.fx && <FunctionMark>fx</FunctionMark>}
          </TreeIcon>
          <span>{n.label}</span>
        </TreeRow>
        {n.children && <TreeNodes nodes={n.children} trail={[...trail, !last]} />}
      </React.Fragment>
    );
  });

const TOOLBOX = [
  'arrow', 'hand', 'textEdit', 'brush', '-', 'bands', '>', 'crossBands', '>', 'components', '>', '-',
  'reportTitle', 'reportSummary', 'headerBand', 'footerBand', 'topBand', 'bottomBand', 'panel', 'table',
  'crosstab', 'text', 'image', 'barcode', 'dottedBox', 'hline', 'vline', 'rect', 'roundRect', 'chart', '-', 'tools',
];

const DOC_TABS = [
  { label: 'Page1', icon: 'page', w: 80, active: true },
  { label: 'Code', icon: 'code', w: 71 },
  { label: 'Preview', icon: 'preview', w: 84 },
  { label: 'HTML Preview', icon: 'html', w: 114 },
];

const TabShape = ({ w, active }) => (
  <svg width={w} height="23" viewBox={`0 0 ${w} 23`} aria-hidden="true">
    <path
      d={`M.5 23V4Q.5.500 4 .5H${w - 21}Q${w - 16} .5 ${w - 13} 6L${w - 5} 20Q${w - 3} 22.500 ${w} 23`}
      fill={active ? '#fff' : '#c5dcfb'}
      stroke="#8fa9d6"
    />
  </svg>
);

const GroupFrame = ({ title, w, launcher, children }) => (
  <Group $w={w}>
    {children}
    <GroupFooter>
      <span />
      <span>{title}</span>
      {launcher && <Launcher />}
    </GroupFooter>
  </Group>
);

const App = () => {
  const [tool, setTool] = useState('arrow');
  const [zoom, setZoom] = useState(36);

  return (
    <>
      <GlobalStyle />
      <Frame>
        <Orb aria-label="Main menu">
          <svg width="38" height="38" viewBox="0 0 38 38">
            <defs>
              <linearGradient id="orb" x1="0" y1="0" x2="0" y2="1">
                <stop offset="0" stopColor="#e9edf3" />
                <stop offset=".45" stopColor="#bcc5d3" />
                <stop offset=".55" stopColor="#909db3" />
                <stop offset="1" stopColor="#e8eef6" />
              </linearGradient>
            </defs>
            <circle cx="19" cy="19" r="18" fill="url(#orb)" stroke="#72839b" />
            <circle cx="19" cy="19" r="16.500" fill="none" stroke="#f6f9fc" opacity=".7" />
            <path d="M10 6h6l11 12v14l-5-4v-5H7v-4h3zM15 12v7h7z" fill="#fff" fillRule="evenodd" />
          </svg>
        </Orb>

        <TitleBar>
          <QuickAccess>
            <IconButton aria-label="Save"><Icon name="save" size={15} /></IconButton>
            <IconButton aria-label="Undo"><Icon name="undo" size={15} /></IconButton>
            <IconButton aria-label="Redo" disabled><Icon name="redo" size={15} /></IconButton>
          </QuickAccess>
          <QuickMore aria-label="Customize">
            <svg width="6" height="7" viewBox="0 0 6 7"><path d="M0 .5h6" stroke="#2c4a76" /><path d="M0 3h6L3 6z" fill="#2c4a76" /></svg>
          </QuickMore>
          <Title>GroupingParentChild.mrt  - Designer</Title>
          <WindowButtons>
            <IconButton aria-label="Minimize">
              <svg width="12" height="5" viewBox="0 0 12 5"><rect x=".5" y=".5" width="11" height="4" rx="1" fill="#fff" stroke="#4b5663" /></svg>
            </IconButton>
            <IconButton aria-label="Maximize">
              <svg width="12" height="10" viewBox="0 0 12 10"><path d="M.5.500h11v9H.5zM3.500 3.500h5v3h-5z" fill="#fff" fillRule="evenodd" stroke="#4b5663" /></svg>
            </IconButton>
            <IconButton aria-label="Close">
              <svg width="12" height="10" viewBox="0 0 12 10"><path d="M.5.500h3L6 3 8.500.5h3L8 5l3.500 4.500h-3L6 7 3.500 9.500h-3L4 5z" fill="#fff" stroke="#4b5663" /></svg>
            </IconButton>
          </WindowButtons>
        </TitleBar>

        <MenuRow>
          <MenuTab $active>Home</MenuTab>
          <MenuTab>Page</MenuTab>
          <MenuTab>Layout</MenuTab>
          <MenuTab>View</MenuTab>
          <MenuRight>
            <IconButton>Select UI Language</IconButton>
            <Caret />
            <IconButton aria-label="Help"><Icon name="help" size={14} /></IconButton>
          </MenuRight>
        </MenuRow>

        <Ribbon>
          <GroupFrame title="Clipboard" w={114}>
            <GroupBody $row $pad="0 4px" $gap={6}>
              <BigButton $w={38} $top={3}>
                <svg width="28" height="32" viewBox="0 0 28 32" aria-hidden="true">
                  <path d="M1.500 4.500h24v23h-24z" fill="#f0bd5c" stroke="#b98734" />
                  <path d="M7 7V3.500h3.500C11 .8 16 .8 16.500 3.500H20V7z" fill="#d4d9e0" stroke="#5b6470" />
                  <path d="M9.500 12.500h12l5 5v13h-17z" fill="#fdfeff" stroke="#6f84a6" />
                  <path d="M21.500 12.500v5h5" fill="#dce6f4" stroke="#6f84a6" />
                  <path d="M12 17.500h7M12 20.500h12M12 23.500h12M12 26.500h12" stroke="#a6b5cb" />
                </svg>
                Paste
              </BigButton>
              <SmallButtons>
                <SmallButton disabled><Icon name="cut" size={15} />Cut</SmallButton>
                <SmallButton disabled><Icon name="copy" size={15} />Copy</SmallButton>
                <SmallButton disabled><Icon name="cross" size={15} />Delete</SmallButton>
              </SmallButtons>
            </GroupBody>
          </GroupFrame>

          <GroupFrame title="Font" w={194}>
            <GroupBody $gap={9}>
              <ToolLine>
                <SelectWrap $w={127} $ml={2}>
                  <select disabled aria-label="Font name"><option>Arial</option></select>
                  <Caret color="#8d8d8d" />
                </SelectWrap>
                <SelectWrap $w={50} $ml={4}>
                  <select disabled aria-label="Font size"><option>8</option></select>
                  <Caret color="#8d8d8d" />
                </SelectWrap>
              </ToolLine>
              <ToolLine>
                <ButtonSet>
                  <ToolButton disabled $w={23}><Letter>B</Letter></ToolButton>
                  <ToolButton disabled><Letter $italic>I</Letter></ToolButton>
                  <ToolButton disabled $w={23}><Letter $underline>U</Letter></ToolButton>
                </ButtonSet>
                <ButtonSet>
                  <ToolButton disabled $w={35} $split><Letter $bar>A</Letter><Caret color="#8d8d8d" /></ToolButton>
                </ButtonSet>
                <ButtonSet>
                  <ToolButton disabled $w={23} $raised><Letter>A</Letter><Caret color="#8d8d8d" up /></ToolButton>
                  <ToolButton disabled $w={23} $raised><Letter $size={12}>A</Letter><Caret color="#8d8d8d" /></ToolButton>
                </ButtonSet>
                <ButtonSet>
                  <ToolButton disabled $w={22} aria-label="Clear"><Icon name="eraser" size={15} /></ToolButton>
                </ButtonSet>
              </ToolLine>
            </GroupBody>
          </GroupFrame>

          <GroupFrame title="Alignment" w={129}>
            <GroupBody $gap={8}>
              <ToolLine>
                <ButtonSet>
                  <ToolButton disabled aria-label="Top"><AlignIcon kind="left" vertical /></ToolButton>
                  <ToolButton disabled aria-label="Middle"><AlignIcon kind="center" vertical /></ToolButton>
                  <ToolButton disabled $w={23} aria-label="Bottom"><AlignIcon kind="right" vertical /></ToolButton>
                </ButtonSet>
                <ButtonSet>
                  <ToolButton disabled $w={35} $split aria-label="Angle"><Icon name="rotate" /><Caret color="#8d8d8d" /></ToolButton>
                </ButtonSet>
              </ToolLine>
              <ToolLine>
                <ButtonSet>
                  <ToolButton disabled aria-label="Left"><AlignIcon kind="left" /></ToolButton>
                  <ToolButton disabled aria-label="Center"><AlignIcon kind="center" /></ToolButton>
                  <ToolButton disabled aria-label="Right"><AlignIcon kind="right" /></ToolButton>
                  <ToolButton disabled $w={23} aria-label="Width"><AlignIcon kind="justify" /></ToolButton>
                </ButtonSet>
                <ButtonSet>
                  <ToolButton disabled $w={22} aria-label="Wrap"><Icon name="wrap" /></ToolButton>
                </ButtonSet>
              </ToolLine>
            </GroupBody>
          </GroupFrame>

          <GroupFrame title="Borders" w={154} launcher>
            <GroupBody $gap={8}>
              <ToolLine>
                <ButtonSet>
                  <ToolButton $w={23} aria-label="All"><BorderIcon sides="tblr" /></ToolButton>
                  <ToolButton $w={23} $checked aria-label="None"><BorderIcon sides="" /></ToolButton>
                </ButtonSet>
                <ButtonSet>
                  {['t', 'l', 'b', 'r'].map((s) => (
                    <ToolButton key={s} aria-label={`Border ${s}`}><BorderIcon sides={s} /></ToolButton>
                  ))}
                </ButtonSet>
              </ToolLine>
              <ToolLine>
                <ButtonSet>
                  <ToolButton $w={22} aria-label="Shadow"><Icon name="shadowBox" /></ToolButton>
                </ButtonSet>
                <ButtonSet>
                  <ToolButton $w={35} $split aria-label="Background"><Icon name="bucket" /><Caret /></ToolButton>
                  <ToolButton $w={36} $split aria-label="Border color"><Icon name="pen" /><Caret /></ToolButton>
                  <ToolButton $w={48} $split aria-label="Border style">
                    <svg width="29" height="13" viewBox="0 0 29 13"><path d="M.5.500h28v12H.5z" fill="#fff" stroke="#000" /><path d="M1 7h27" stroke="#000" strokeWidth="2" /></svg>
                    <Caret />
                  </ToolButton>
                </ButtonSet>
              </ToolLine>
            </GroupBody>
          </GroupFrame>

          <GroupFrame title="Text Format" w={110}>
            <GroupBody $pad="11px 3px 0" $gap={8}>
              <SelectWrap $w={102} $h={24} $flat>
                <select disabled aria-label="Text Format"><option>Text Format</option></select>
                <Caret color="#8d8d8d" />
              </SelectWrap>
              <ToolLine $center>
                <ButtonSet>
                  <ToolButton disabled $w={36} $split aria-label="Currency"><Icon name="money" /><Caret color="#8d8d8d" /></ToolButton>
                  <ToolButton disabled $w={36} $split aria-label="Date"><Icon name="date" /><Caret color="#8d8d8d" /></ToolButton>
                </ButtonSet>
              </ToolLine>
            </GroupBody>
          </GroupFrame>

          <GroupFrame title="Style" w={270} launcher>
            <GroupBody $row $pad="2px 3px 0">
              <BigButton $w={62} $gap={5} $top={13}>
                <svg width="32" height="30" viewBox="0 0 32 30" aria-hidden="true">
                  <path d="M1.500 1.500h28v25h-28z" fill="#fbfdff" stroke="#4c5c75" />
                  <path d="M17 5.500h10M17 9.500h10M17 13.500h10M4 18.500h18M4 22.500h12" stroke="#8fb2e4" />
                  <path d="M5 14h3M10 14h4M6.500 14L9.500 4.500l3 9.500M7.500 11h4" stroke="#111" strokeWidth="1.400" fill="none" />
                  <path d="M20 19L29 7l2 1-7 14z" fill="#dfe3ea" stroke="#525d6c" />
                  <path d="M11 29c3-1 3-5 7-8 3-1 5 1 4 4-2 3-6 5-11 4z" fill="#d08532" stroke="#5a4b7e" />
                </svg>
                Conditions
              </BigButton>
              <BigButton $w={62} $gap={4} $top={7}>
                <svg width="30" height="30" viewBox="0 0 30 30" aria-hidden="true">
                  <path d="M1 19l7-15q1-3 4-3t3 3l3 10-3 2-1-3H8l-3 6zM9 10h4l-1-6z" fill="#c34bbd" fillRule="evenodd" stroke="#893686" strokeWidth=".6" />
                  <path d="M6 28v-2l2-1L16 5h3l8 20 3 1v2h-9v-2l2-1-1-4h-8l-2 4 2 1v2zM15 18h6l-3-8z" fill="#4c84d8" fillRule="evenodd" stroke="#28539b" strokeWidth=".6" />
                </svg>
                <span>Style<br />Designer</span>
              </BigButton>
              <Gallery>
                <GalleryItem>[None]</GalleryItem>
                <GalleryItem $selected>Odd</GalleryItem>
              </Gallery>
              <GalleryScroll>
                <ScrollStep aria-label="Up"><Caret color="#8d99ab" up /></ScrollStep>
                <ScrollStep aria-label="Down" $push><Caret color="#8d99ab" /></ScrollStep>
                <ScrollStep aria-label="More" $strong>
                  <svg width="6" height="6" viewBox="0 0 6 6"><path d="M0 .5h6" stroke="#123a7c" /><path d="M0 3h6L3 6z" fill="#123a7c" /></svg>
                </ScrollStep>
              </GalleryScroll>
            </GroupBody>
          </GroupFrame>
        </Ribbon>

        <Body>
          <Toolbox>
            {TOOLBOX.map((t, i) => {
              if (t === '-') return <ToolboxRule key={i} />;
              if (t === '>') {
                return (
                  <ToolboxArrow key={i} aria-label="More">
                    <svg width="4" height="7" viewBox="0 0 4 7"><path d="M0 0v7l4-3.500z" fill="#000" /></svg>
                  </ToolboxArrow>
                );
              }
              return (
                <ToolboxButton key={i} $active={tool === t} aria-label={t} onClick={() => setTool(t)}>
                  <Icon name={t} />
                </ToolboxButton>
              );
            })}
          </Toolbox>

          <Workspace>
            <DocTabs>
              {DOC_TABS.map((t, i) => (
                <DocTab key={t.label} $w={t.w} $active={t.active} $z={DOC_TABS.length - i}>
                  <TabShape w={t.w} active={t.active} />
                  <Icon name={t.icon} size={15} />
                  {t.label}
                </DocTab>
              ))}
            </DocTabs>
            <Canvas>
              <TopRulerBar>
                <HRuler>
                  <CursorMark />
                  <Ruler cells={RULER_X} />
                </HRuler>
              </TopRulerBar>
              <VRuler>
                <Ruler cells={RULER_Y} vertical />
              </VRuler>
              <PageArea>
                <Sheet>
                  <Printable>
                    <PageGrid />
                    <Band>
                      <BandHeader>Data2; Business Object: Demo</BandHeader>
                    </Band>
                    <Band>
                      <BandHeader $tone="orange">{'GroupHeaderBand1; Condition: {Demo.Categories.CategoryName}'}</BandHeader>
                      <BandBody $tone="orange" $h={18}>
                        <Field $boxed $w={515}>{'{Demo.Categories.CategoryName}'}</Field>
                        <Field $boxed>{'{Demo.Categ'}</Field>
                      </BandBody>
                    </Band>
                    <Band>
                      <BandHeader $tone="orange">{'GroupHeaderBand2; Condition: {Demo.Categories.CategoriesProducts.SupplierID}'}</BandHeader>
                      <BandBody $tone="orange" $h={18}>
                        <Indent />
                        <Field $boxed>{'{Demo.Categories.CategoriesProducts.SupplierID}'}</Field>
                      </BandBody>
                    </Band>
                    <Band>
                      <BandHeader>Data; Business Object: Demo.Categories.CategoriesProducts</BandHeader>
                      <BandBody $tone="blue" $h={25}>
                        <Indent $w={29} />
                        <Field $w={112}>{'{Demo.Categories.Categorie\nsProducts.ProductID}'}</Field>
                        <Field $w={142}>{'{Demo.Categories.CategoriesProduct\ns.ProductName}'}</Field>
                        <Field $w={142}>{'{Demo.Categories.CategoriesProduct\ns.SupplierID}'}</Field>
                        <Field>{'{Demo.Categories.CategoriesProdu\ncts.CategoryID}'}</Field>
                      </BandBody>
                    </Band>
                  </Printable>
                </Sheet>
              </PageArea>
              <ScrollBar>
                <button aria-label="Scroll up"><svg width="9" height="5" viewBox="0 0 9 5"><path d="M0 5h9L4.500 0z" fill="#3f5173" /></svg></button>
                <ScrollTrack>
                  <ScrollThumb><i /><i /><i /><i /></ScrollThumb>
                </ScrollTrack>
                <button aria-label="Scroll down"><svg width="9" height="5" viewBox="0 0 9 5"><path d="M0 0h9L4.500 5z" fill="#3f5173" /></svg></button>
              </ScrollBar>
            </Canvas>
          </Workspace>

          <Side>
            <PanelHead>
              <h2>Dictionary</h2>
              <IconButton aria-label="Pin"><Icon name="pin" size={12} /></IconButton>
              <IconButton aria-label="Close panel"><Icon name="close" size={11} /></IconButton>
            </PanelHead>
            <PanelBox>
              <PanelTools>
                <ToolSlot $w={42}>Actions</ToolSlot>
                <ToolSlot $w={24} aria-label="Actions menu"><Caret /></ToolSlot>
                <ToolSlot $w={15} aria-label="New item"><Icon name="newItem" /></ToolSlot>
                <ToolSlot $w={21} aria-label="New item menu"><Caret /></ToolSlot>
                <ToolSlot $w={18} aria-label="Edit"><Icon name="edit" /></ToolSlot>
                <ToolSlot $w={28} aria-label="Delete"><Icon name="remove" /></ToolSlot>
                <hr />
                <ToolSlot $w={24} aria-label="Move up"><Icon name="up" /></ToolSlot>
                <ToolSlot $w={24} aria-label="Move down"><Icon name="down" /></ToolSlot>
                <ToolSlot $w={24} aria-label="Sort">
                  <SortLetters><span>A</span><b>Z</b></SortLetters>
                  <svg width="8" height="16" viewBox="0 0 8 16">
                    <path d="M4.500 0v12" stroke="#000" strokeWidth="2" />
                    <path d="M1.500 11h6l-3 5z" fill="#000" />
                  </svg>
                </ToolSlot>
                <ToolSlot $w={14} aria-label="Sort menu"><Caret /></ToolSlot>
              </PanelTools>
              <TreeBox>
                <TreeNodes nodes={TREE} />
              </TreeBox>
              <Options>
                <label><input type="checkbox" defaultChecked />Create Field on Double Click</label>
                <label><input type="checkbox" />Create Label</label>
                <label><input type="checkbox" />Use Aliases</label>
              </Options>
            </PanelBox>
            <PanelTabs>
              <PanelTab $w={76}><Icon name="properties" size={15} />Properties</PanelTab>
              <PanelTab $w={77} $active><Icon name="dictionary" size={13} />Dictionary</PanelTab>
              <PanelTab $w={86}><Icon name="reportTree" size={14} />Report Tree</PanelTab>
            </PanelTabs>
          </Side>
        </Body>

        <StatusBar>
          <StatusItem $gap={13}>Centimeters<Caret up /></StatusItem>
          <StatusItem $gap={9}>
            <svg width="8" height="12" viewBox="0 0 8 12"><path d="M.5.500l6 5.500-6 5.500z" fill="#3d9a34" stroke="#1f6a1c" /></svg>
            Report Checker
          </StatusItem>
          <StatusItem>Page1</StatusItem>
          <StatusItem $last>{'X:7,23  Y:0,22'}</StatusItem>
          <StatusRight>
            <ViewModes>
              {['fitWidth', 'fitHeight', 'fitPage', 'zoom100'].map((n) => (
                <button key={n} aria-label={n}><Icon name={n} size={15} /></button>
              ))}
            </ViewModes>
            <IconButton>75%</IconButton>
            <IconButton aria-label="Zoom out">
              <svg width="28" height="18" viewBox="0 0 28 18"><circle cx="19" cy="9" r="7" fill="#dfe8f4" stroke="#6a83a9" /><path d="M15 9h8" stroke="#3d5274" strokeWidth="2" /></svg>
            </IconButton>
            <ZoomTrack>
              <input type="range" aria-label="Zoom" min="0" max="100" value={zoom} onChange={(e) => setZoom(Number(e.target.value))} />
            </ZoomTrack>
            <IconButton aria-label="Zoom in">
              <svg width="16" height="18" viewBox="0 0 16 18"><circle cx="8" cy="9" r="7" fill="#dfe8f4" stroke="#6a83a9" /><path d="M4 9h8M8 5v8" stroke="#3d5274" strokeWidth="2" /></svg>
            </IconButton>
            <SizeGrip width="11" height="11" viewBox="0 0 11 11" aria-hidden="true">
              <path d="M8 0h2v2H8zM8 4h2v2H8zM4 4h2v2H4zM8 8h2v2H8zM4 8h2v2H4zM0 8h2v2H0z" fill="#eaf3ff" />
            </SizeGrip>
          </StatusRight>
        </StatusBar>
      </Frame>
    </>
  );
};

export default App;
